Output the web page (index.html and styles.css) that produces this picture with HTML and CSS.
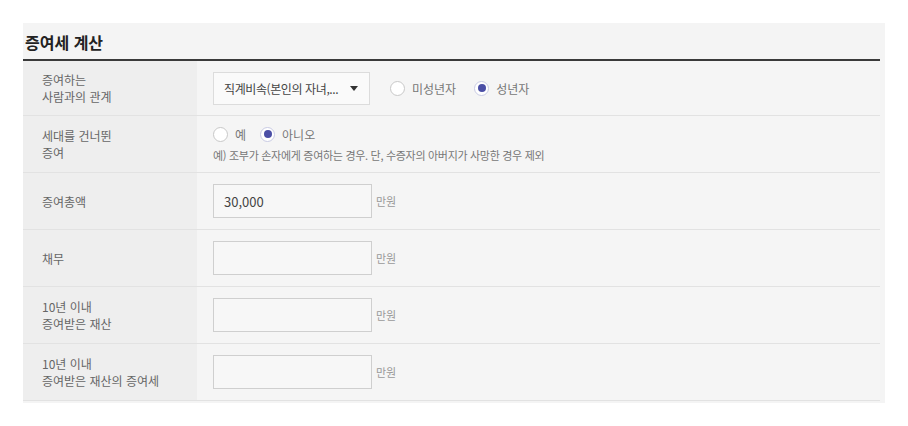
FILE: index.html
```html
<!DOCTYPE html>
<html lang="ko">
<head>
    <meta charset="UTF-8">
    <title>증여세 계산</title>
    <link rel="stylesheet" href="styles.css">
</head>
<body>
    <div class="calc">
        <div class="calc-title">증여세 계산</div>
        <div class="calc-table">
            <div class="row">
                <div class="label">증여하는<br>사람과의 관계</div>
                <div class="value">
                    <div class="select"><span>직계비속(본인의 자녀,...</span><span class="arrow"></span></div>
                    <span class="radio"><span class="dot"></span>미성년자</span>
                    <span class="radio checked"><span class="dot"></span>성년자</span>
                </div>
            </div>
            <div class="row">
                <div class="label">세대를 건너뛴<br>증여</div>
                <div class="value stack">
                    <div class="radios">
                        <span class="radio"><span class="dot"></span>예</span>
                        <span class="radio checked"><span class="dot"></span>아니오</span>
                    </div>
                    <div class="hint">예) 조부가 손자에게 증여하는 경우. 단, 수증자의 아버지가 사망한 경우 제외</div>
                </div>
            </div>
            <div class="row">
                <div class="label">증여총액</div>
                <div class="value">
                    <div class="input">30,000</div>
                    <span class="unit">만원</span>
                </div>
            </div>
            <div class="row">
                <div class="label">채무</div>
                <div class="value">
                    <div class="input"></div>
                    <span class="unit">만원</span>
                </div>
            </div>
            <div class="row">
                <div class="label">10년 이내<br>증여받은 재산</div>
                <div class="value">
                    <div class="input"></div>
                    <span class="unit">만원</span>
                </div>
            </div>
            <div class="row">
                <div class="label">10년 이내<br>증여받은 재산의 증여세</div>
                <div class="value">
                    <div class="input"></div>
                    <span class="unit">만원</span>
                </div>
            </div>
        </div>
    </div>
</body>
</html>
```

FILE: styles.css
```css
body {
    margin: 0;
    background-color: white;
    font-family: "Noto Sans CJK KR", "Liberation Sans", sans-serif;
}
.calc {
    margin: 23px 0 0 23px;
    width: 857px;
    padding: 0 5px 2px 0;
    background-color: #f4f4f4;
}
.calc-title {
    height: 36px;
    line-height: 38px;
    padding-left: 2px;
    font-size: 16px;
    font-weight: bold;
    color: #222;
    border-bottom: 2px solid #3a3a3a;
}
.calc-table {
    display: flex;
    flex-direction: column;
}
.row {
    display: flex;
    height: 56px;
    border-bottom: 1px solid #e2e2e2;
}
.row:first-child {
    height: 54px;
}
.label {
    width: 155px;
    padding-left: 19px;
    background-color: #eeeeee;
    display: flex;
    align-items: center;
    font-size: 12px;
    line-height: 17px;
    color: #666;
}
.value {
    flex: 1;
    display: flex;
    align-items: center;
    padding-left: 16px;
    background-color: #f5f5f5;
}
.value.stack {
    flex-direction: column;
    align-items: flex-start;
    justify-content: center;
}
.radios {
    display: flex;
}
.select {
    display: flex;
    align-items: center;
    justify-content: space-between;
    padding: 0 11px 0 10px;
    box-sizing: border-box;
    width: 157px;
    height: 33px;
    border: 1px solid #dcdcdc;
    background-color: #fafafa;
    font-size: 12px;
    letter-spacing: -0.4px;
    color: #444;
    margin-right: 20px;
}
.arrow {
    width: 0;
    height: 0;
    border-left: 4px solid transparent;
    border-right: 4px solid transparent;
    border-top: 5px solid #333;
}
.radio {
    display: inline-flex;
    align-items: center;
    font-size: 12px;
    color: #777;
    margin-right: 18px;
}
.radios .radio {
    margin-right: 14px;
}
.dot {
    width: 15px;
    height: 15px;
    border: 1px solid #c8c8c8;
    border-radius: 50%;
    background-color: white;
    box-sizing: border-box;
    margin-right: 7px;
    position: relative;
}
.radio.checked .dot {
    border-color: #c9cbe4;
}
.radio.checked .dot::after {
    content: "";
    position: absolute;
    left: 2.5px;
    top: 2.5px;
    width: 8px;
    height: 8px;
    border-radius: 50%;
    background-color: #4b4fa6;
}
.hint {
    margin-top: 4px;
    font-size: 11px;
    color: #777;
    letter-spacing: -0.3px;
}
.input {
    width: 159px;
    height: 34px;
    border: 1px solid #cfcfcf;
    background-color: #f7f7f7;
    box-sizing: border-box;
    padding-left: 10px;
    display: flex;
    align-items: center;
    font-size: 13px;
    color: #444;
}
.unit {
    margin-left: 4px;
    font-size: 11px;
    color: #999;
}
```
